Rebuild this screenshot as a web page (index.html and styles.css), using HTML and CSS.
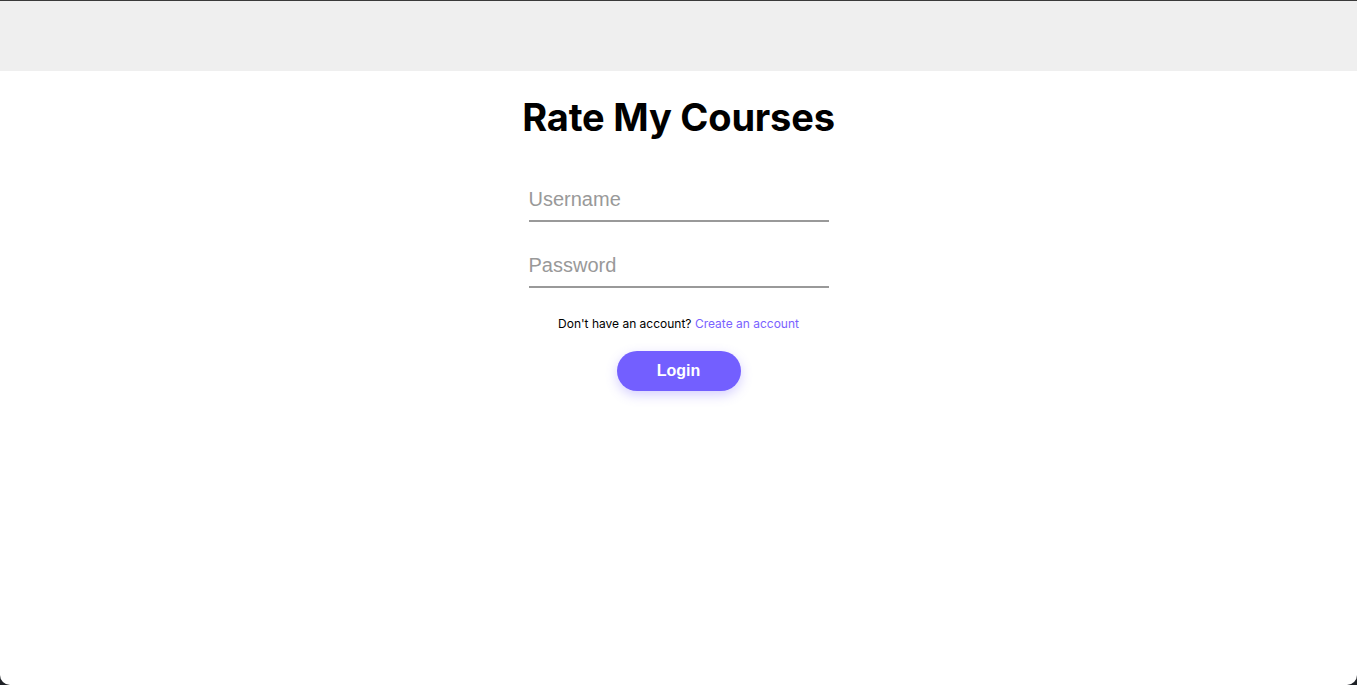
FILE: index.html
```html
<!DOCTYPE html>
<html lang="en">
<head>
<meta charset="utf-8">
<title>Rate My Courses</title>
<link rel="stylesheet" href="styles.css">
</head>
<body>
<div class="window">
  <header class="topbar"></header>
  <main class="login">
    <h1 class="title">Rate My Courses</h1>
    <form class="form">
      <input class="field" type="text" placeholder="Username">
      <input class="field" type="password" placeholder="Password">
      <p class="signup">Don't have an account? <a class="signup-link" href="#">Create an account</a></p>
      <button class="btn" type="button">Login</button>
    </form>
  </main>
</div>
</body>
</html>
```
FILE: styles.css
```css
html, body {
  margin: 0;
  height: 100%;
  background: #1e2126;
}
.window {
  height: 100%;
  background: #ffffff;
  border-radius: 0 0 10px 10px;
  overflow: hidden;
  display: flex;
  flex-direction: column;
}
.topbar {
  height: 70px;
  flex: none;
  background: #efefef;
  border-top: 1px solid #3a3a3a;
}
.login {
  display: flex;
  flex-direction: column;
  align-items: center;
}
.title {
  font-family: Inter, "Noto Sans", sans-serif;
  font-weight: 700;
  font-size: 38px;
  letter-spacing: -0.2px;
  color: #000;
  margin: 23px 0 0;
  line-height: 46px;
}
.form {
  display: flex;
  flex-direction: column;
  align-items: center;
  margin-top: 46px;
}
.field {
  width: 300px;
  box-sizing: border-box;
  border: none;
  border-bottom: 2px solid #999;
  outline: none;
  background: transparent;
  font-family: "Liberation Sans", Arial, sans-serif;
  font-size: 20px;
  padding: 0 0 8px 0;
  height: 36px;
  margin-bottom: 30px;
  color: #333;
}
.field::placeholder {
  color: #999;
}
.signup {
  font-family: Inter, "Noto Sans", sans-serif;
  font-size: 12px;
  color: #000;
  margin: -2px 0 0;
  line-height: 16px;
}
.signup-link {
  color: #7a62ff;
  text-decoration: none;
}
.btn {
  margin-top: 19px;
  width: 124px;
  height: 40px;
  border: none;
  border-radius: 20px;
  background: #735fff;
  color: #fff;
  font-family: "Liberation Sans", Arial, sans-serif;
  font-weight: 700;
  font-size: 16px;
  box-shadow: 0 4px 12px rgba(115, 95, 255, 0.3);
  cursor: pointer;
}
```
